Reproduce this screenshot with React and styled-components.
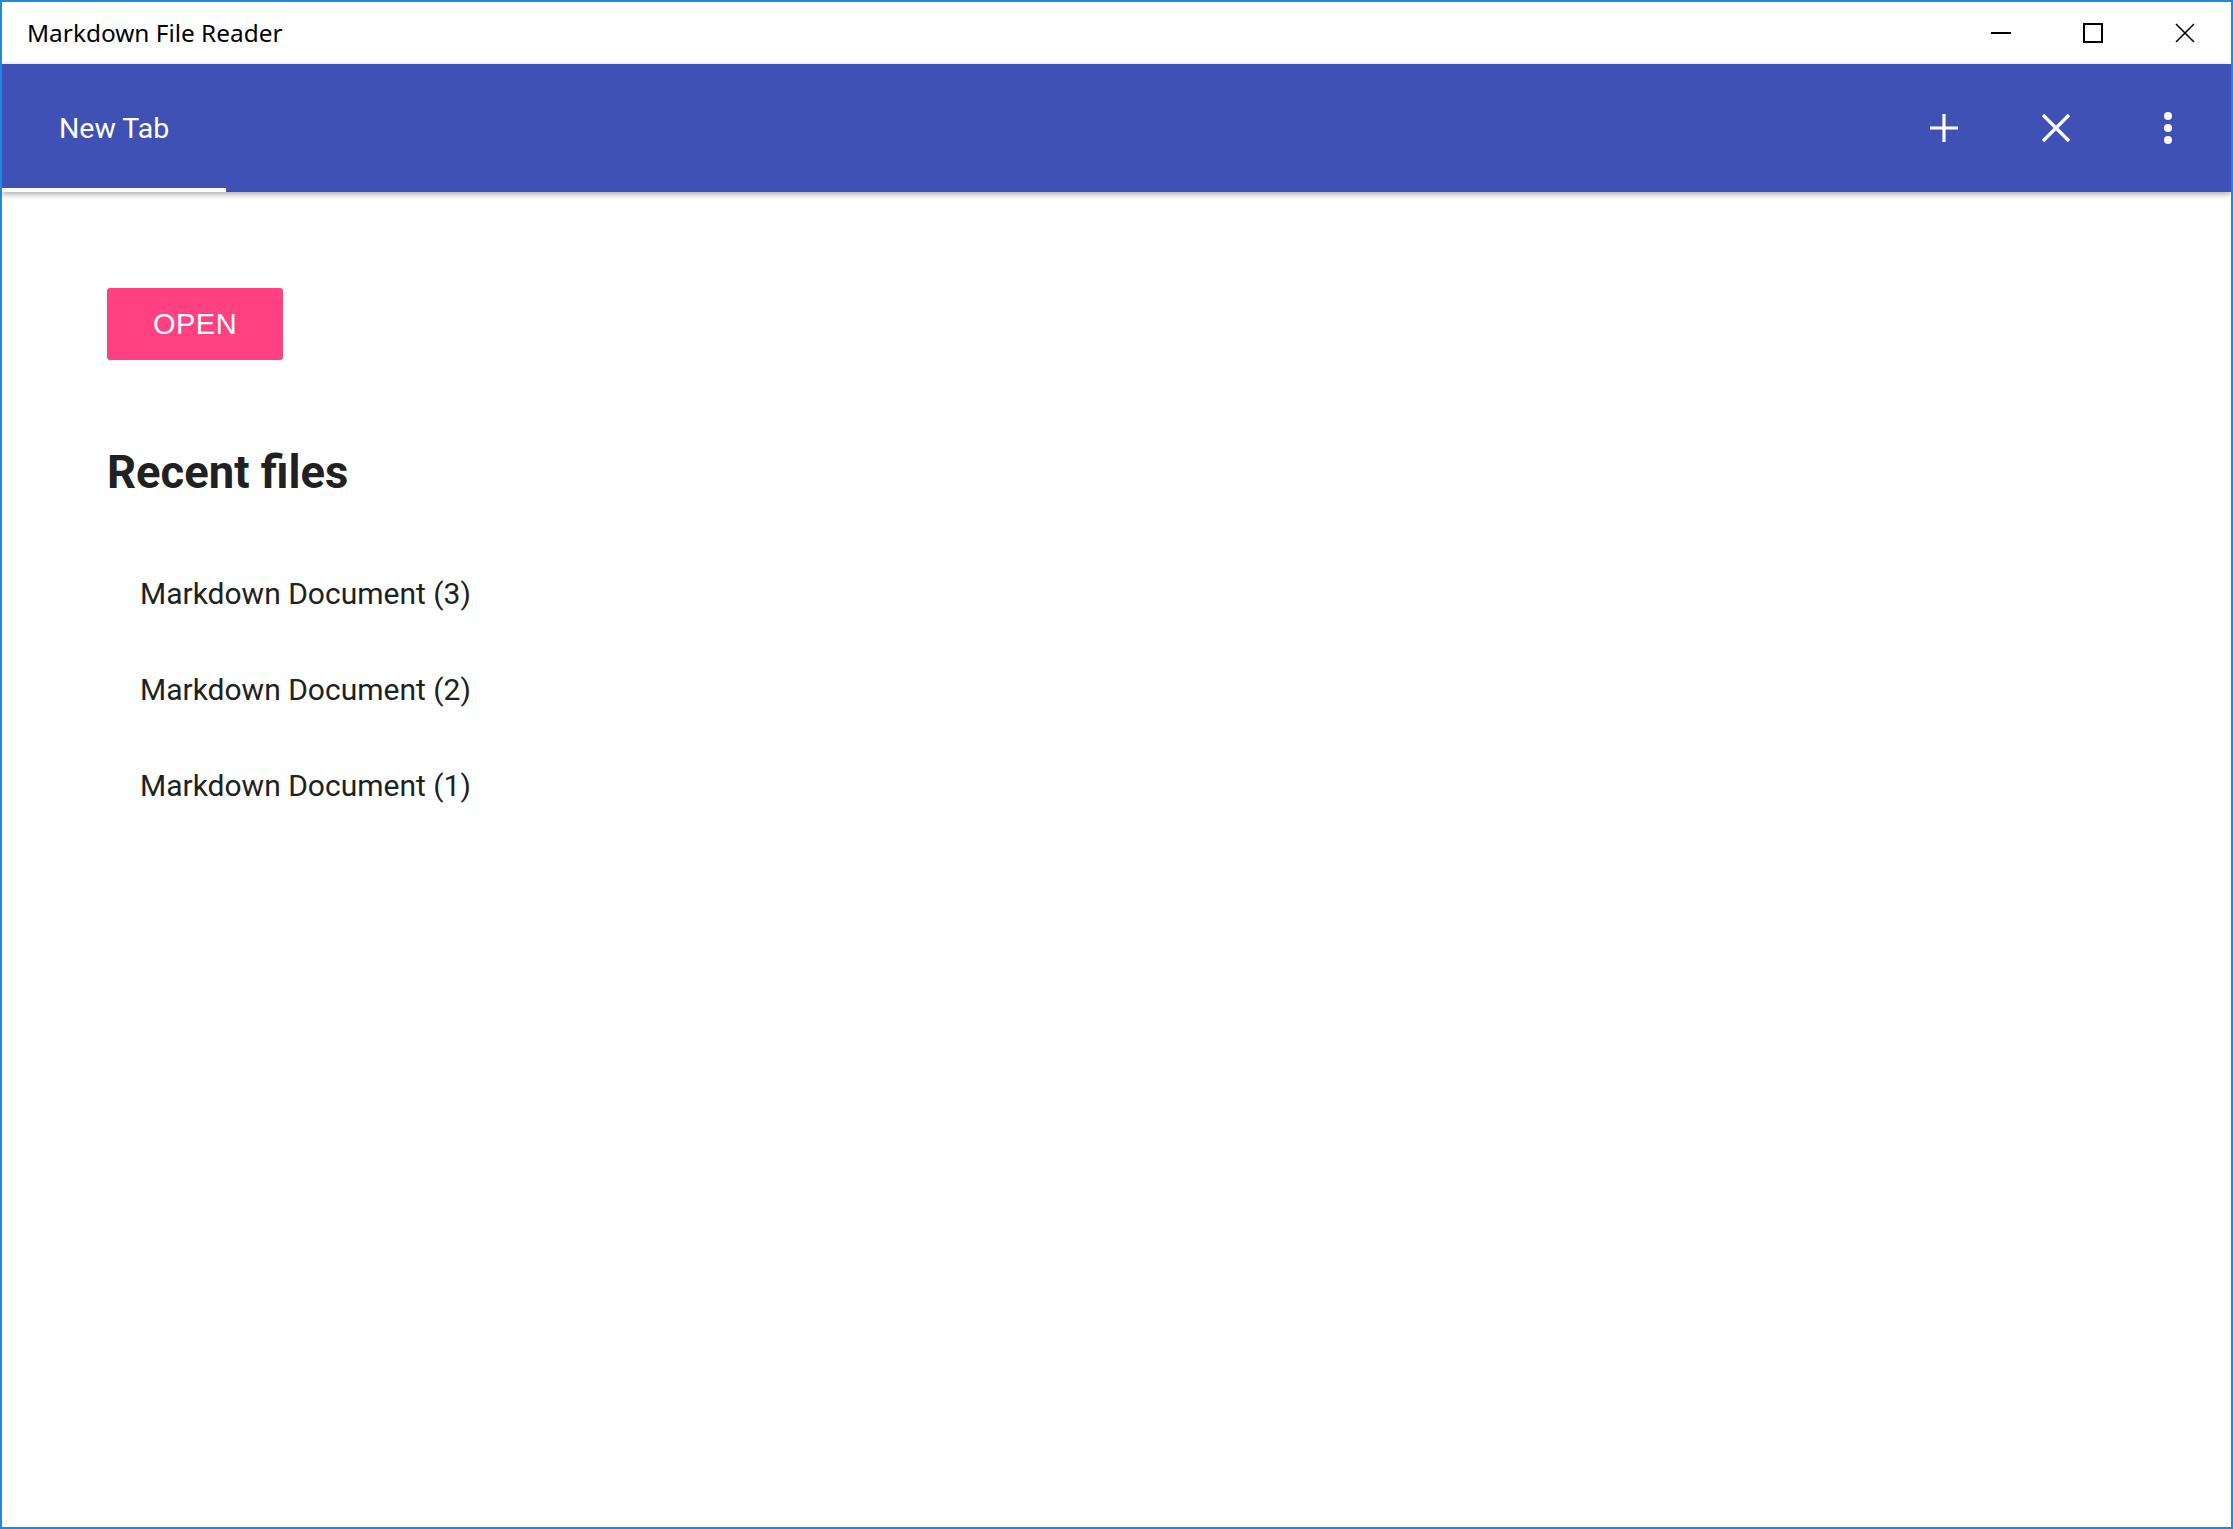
import styled, { createGlobalStyle } from "styled-components";

const GlobalStyle = createGlobalStyle`
  html, body {
    margin: 0;
    padding: 0;
    background: #ffffff;
  }
  * {
    box-sizing: border-box;
  }
`;

const Window = styled.div`
  width: 2233px;
  height: 1529px;
  border: 2px solid #1e88e5;
  display: flex;
  flex-direction: column;
  background: #ffffff;
  overflow: hidden;
`;

const TitleBar = styled.div`
  height: 62px;
  flex-shrink: 0;
  display: flex;
  align-items: center;
  padding-left: 25px;
  background: #ffffff;
`;

const Title = styled.div`
  flex: 1;
  font-family: "Noto Sans", "Open Sans", sans-serif;
  font-size: 24.4px;
  color: #000000;
  padding-bottom: 2px;
`;

const WindowControls = styled.div`
  display: flex;
  height: 100%;
`;

const WindowButton = styled.div`
  width: 92px;
  height: 100%;
  display: flex;
  align-items: center;
  justify-content: center;
`;

const AppBar = styled.div`
  height: 128px;
  flex-shrink: 0;
  display: flex;
  align-items: stretch;
  background: #3f51b5;
  box-shadow: 0 2px 6px rgba(0, 0, 0, 0.35);
  position: relative;
  z-index: 1;
`;

const Tab = styled.div`
  width: 224px;
  display: flex;
  align-items: center;
  padding-left: 57px;
  font-family: Roboto, sans-serif;
  font-size: 28.5px;
  color: #ffffff;
  border-bottom: 4px solid ${(p) => (p.$active ? "#ffffff" : "transparent")};
  padding-top: 4px;
`;

const Spacer = styled.div`
  flex: 1;
`;

const Actions = styled.div`
  display: flex;
  align-items: center;
  padding-right: 7px;
`;

const IconButton = styled.button`
  width: 112px;
  height: 100%;
  border: none;
  background: transparent;
  display: flex;
  align-items: center;
  justify-content: center;
  padding: 0;
  cursor: pointer;
`;

const Content = styled.main`
  flex: 1;
  padding: 96px 0 0 105px;
  display: flex;
  flex-direction: column;
  align-items: flex-start;
`;

const OpenButton = styled.button`
  width: 176px;
  height: 72px;
  border: none;
  border-radius: 3px;
  background: #ff4081;
  color: #ffffff;
  font-family: "Liberation Sans", Arial, sans-serif;
  font-size: 29px;
  letter-spacing: 0.5px;
  cursor: pointer;
`;

const Heading = styled.h2`
  margin: 85px 0 0;
  font-family: Roboto, sans-serif;
  font-weight: 700;
  font-size: 45.4px;
  line-height: 55px;
  color: #212121;
`;

const FileList = styled.ul`
  list-style: none;
  margin: 46px 0 0;
  padding: 0 0 0 33px;
`;

const FileItem = styled.li`
  height: 96px;
  line-height: 96px;
  font-family: Roboto, sans-serif;
  font-size: 30px;
  color: #212121;
`;

const files = [
  "Markdown Document (3)",
  "Markdown Document (2)",
  "Markdown Document (1)",
];

function App() {
  return (
    <>
      <GlobalStyle />
      <Window>
        <TitleBar>
          <Title>Markdown File Reader</Title>
          <WindowControls>
            <WindowButton>
              <svg width="20" height="20" viewBox="0 0 20 20">
                <line x1="0" y1="10" x2="20" y2="10" stroke="#000" strokeWidth="2" />
              </svg>
            </WindowButton>
            <WindowButton>
              <svg width="20" height="20" viewBox="0 0 20 20">
                <rect x="1" y="1" width="18" height="18" fill="none" stroke="#000" strokeWidth="2" />
              </svg>
            </WindowButton>
            <WindowButton>
              <svg width="20" height="20" viewBox="0 0 20 20">
                <path d="M1 1 L19 19 M19 1 L1 19" stroke="#000" strokeWidth="1.6" />
              </svg>
            </WindowButton>
          </WindowControls>
        </TitleBar>

        <AppBar>
          <Tab $active>New Tab</Tab>
          <Spacer />
          <Actions>
            <IconButton aria-label="New tab">
              <svg width="30" height="30" viewBox="0 0 30 30">
                <path d="M15 1 V29 M1 15 H29" stroke="#fff" strokeWidth="3.2" />
              </svg>
            </IconButton>
            <IconButton aria-label="Close tab">
              <svg width="30" height="30" viewBox="0 0 30 30">
                <path d="M2 2 L28 28 M28 2 L2 28" stroke="#fff" strokeWidth="3.2" />
              </svg>
            </IconButton>
            <IconButton aria-label="More">
              <svg width="10" height="32" viewBox="0 0 10 32">
                <circle cx="5" cy="4" r="4" fill="#fff" />
                <circle cx="5" cy="16" r="4" fill="#fff" />
                <circle cx="5" cy="28" r="4" fill="#fff" />
              </svg>
            </IconButton>
          </Actions>
        </AppBar>

        <Content>
          <OpenButton>OPEN</OpenButton>
          <Heading>Recent files</Heading>
          <FileList>
            {files.map((name) => (
              <FileItem key={name}>{name}</FileItem>
            ))}
          </FileList>
        </Content>
      </Window>
    </>
  );
}

export default App;
